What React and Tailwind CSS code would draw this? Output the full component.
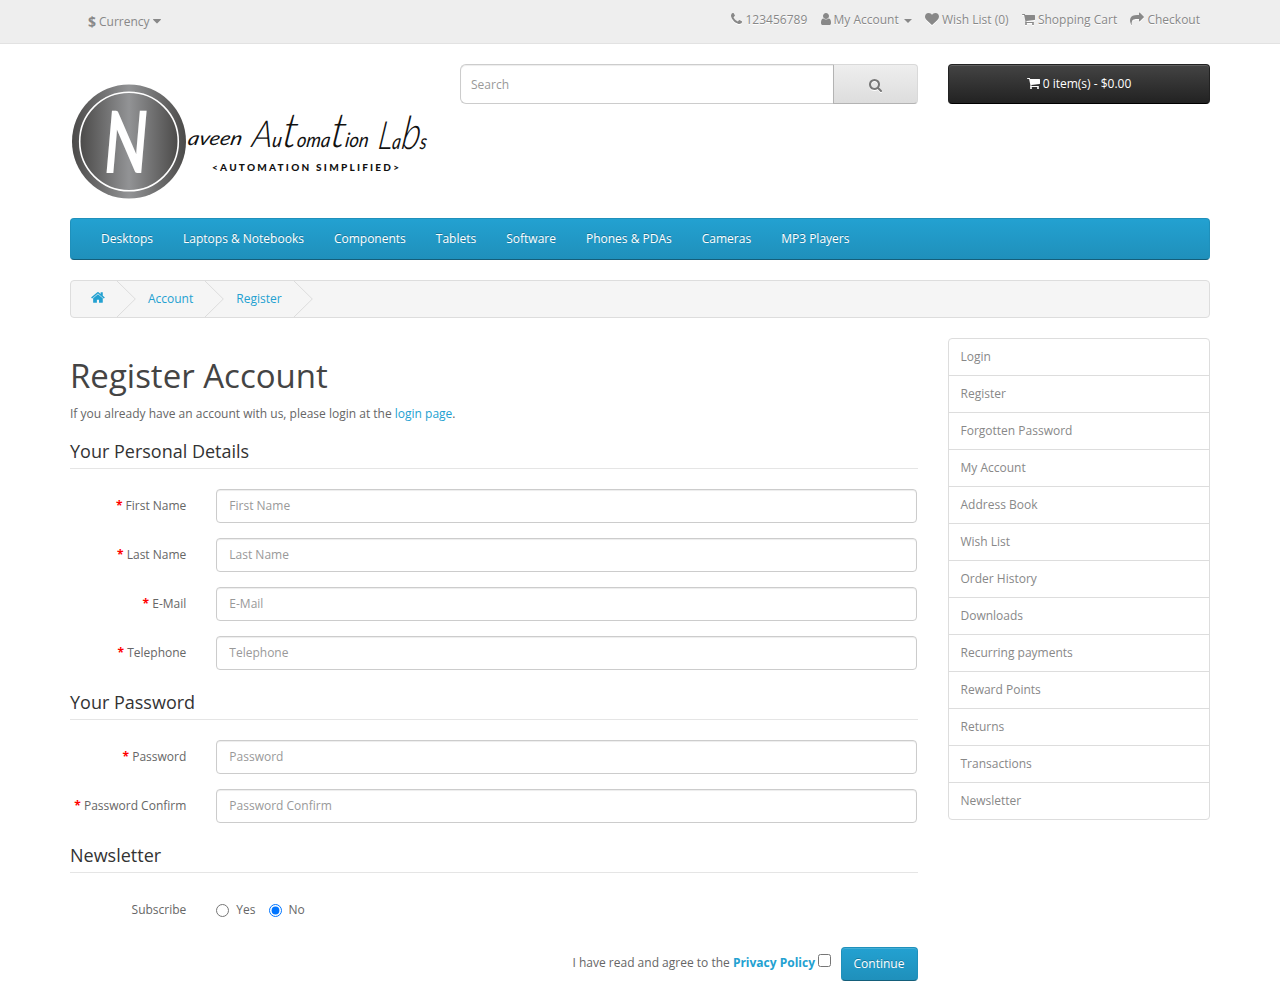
import React from "react";

const ICONS = {
  phone: [192, 1408, "M1600 1240q0 27-10 70.5t-21 68.5q-21 50-122 106-94 51-186 51-27 0-53-3.5t-57.5-12.5-47-14.5-55.5-20.5-49-18q-98-35-175-83-127-79-264-216t-216-264q-48-77-83-175-3-9-18-49t-20.5-55.5-14.5-47-12.5-57.5-3.5-53q0-92 51-186 56-101 106-122 25-11 68.5-21t70.5-10q14 0 21 3 18 6 53 76 11 19 30 54t35 63.5 31 53.5q3 4 17.5 25t21.5 35.5 7 28.5q0 20-28.5 50t-62 55-62 53-28.5 46q0 9 5 22.5t8.5 20.5 14 24 11.5 19q76 137 174 235t235 174q2 1 19 11.5t24 14 20.5 8.5 22.5 5q18 0 46-28.5t53-62 55-62 50-28.5q14 0 28.5 7t35.5 21.5 25 17.5q25 15 53.5 31t63.5 35 54 30q70 35 76 53 3 7 3 21z"],
  user: [256, 1280, "M1536 1399q0 109-62.5 187t-150.5 78h-854q-88 0-150.5-78t-62.5-187q0-85 8.5-160.5t31.5-152 58.5-131 94-89 134.5-34.5q131 128 313 128t313-128q76 0 134.5 34.5t94 89 58.5 131 31.5 152 8.5 160.5zm-256-887q0 159-112.5 271.5t-271.5 112.5-271.5-112.5-112.5-271.5 112.5-271.5 271.5-112.5 271.5 112.5 112.5 271.5z"],
  heart: [0, 1792, "M896 1664q-26 0-44-18l-624-602q-10-8-27.5-26t-55.5-65.5-68-97.5-53.5-121-23.5-138q0-220 127-344t351-124q62 0 126.5 21.5t120 58 95.5 68.5 76 68q36-36 76-68t95.5-68.5 120-58 126.5-21.5q224 0 351 124t127 344q0 221-229 450l-623 600q-18 18-44 18z"],
  cart: [64, 1664, "M704 1536q0 52-38 90t-90 38-90-38-38-90 38-90 90-38 90 38 38 90zm896 0q0 52-38 90t-90 38-90-38-38-90 38-90 90-38 90 38 38 90zm128-1088v512q0 24-16.5 42.5t-40.5 21.5l-1044 122q13 60 13 70 0 16-24 64h920q26 0 45 19t19 45-19 45-45 19h-1024q-26 0-45-19t-19-45q0-11 8-31.5t16-36 21.5-40 15.5-29.5l-177-823h-204q-26 0-45-19t-19-45 19-45 45-19h256q16 0 28.5 6.5t19.5 15.5 13 24.5 8 26 5.5 29.5 4.5 26h1201q26 0 45 19t19 45z"],
  share: [0, 1792, "M1792 640q0 26-19 45l-512 512q-19 19-45 19t-45-19-19-45v-256h-224q-98 0-175.5 6t-154 21.5-133 42.5-105.5 69.5-80 101-48.5 138.5-17.5 181q0 55 5 123 0 6 2.5 23.5t2.5 26.5q0 15-8.5 25t-23.5 10q-16 0-28-17-7-9-13-22t-13.5-30-10.5-24q-127-285-127-451 0-199 53-333 162-403 875-403h224v-256q0-26 19-45t45-19 45 19l512 512q19 19 19 45z"],
  search: [64, 1664, "M1216 832q0-185-131.5-316.5t-316.5-131.5-316.5 131.5-131.5 316.5 131.5 316.5 316.5 131.5 316.5-131.5 131.5-316.5zm512 832q0 52-38 90t-90 38q-54 0-90-38l-343-342q-179 124-399 124-143 0-273.5-55.5t-225-150-150-225-55.5-273.5 55.5-273.5 150-225 225-150 273.5-55.5 273.5 55.5 225 150 150 225 55.5 273.5q0 220-124 399l343 343q37 37 37 90z"],
  home: [64, 1664, "M1472 992v480q0 26-19 45t-45 19h-384v-384h-256v384h-384q-26 0-45-19t-19-45v-480q0-1 .5-3t.5-3l575-474 575 474q1 2 1 6zm223-69l-62 74q-8 9-21 11h-3q-13 0-21-7l-692-577-692 577q-12 8-24 7-13-2-21-11l-62-74q-8-10-7-23.5t11-21.5l719-599q32-26 76-26t76 26l244 204v-195q0-14 9-23t23-9h192q14 0 23 9t9 23v408l219 182q10 8 11 21.5t-7 23.5z"],
  caret: [384, 1024, "M1408 704q0 26-19 45l-448 448q-19 19-45 19t-45-19l-448-448q-19-19-19-45t19-45 45-19h896q26 0 45 19t19 45z"],
};

function Icon({ name, className = "h-[14px]" }) {
  const [x, w, d] = ICONS[name];
  return (
    <svg viewBox={`${x} 0 ${w} 1792`} className={`shrink-0 fill-current ${className}`}>
      <path d={d} />
    </svg>
  );
}

function TopLink({ icon, children }) {
  return (
    <a className="flex h-5 items-center gap-[3px]">
      <Icon name={icon} className="mb-[2px] h-[14px] drop-shadow-[0_1px_0_#fff]" />
      <span>{children}</span>
    </a>
  );
}

function Logo() {
  return (
    <svg viewBox="70 64 360 134.5" className="block h-[134.5px] w-[360px] overflow-visible">
      <defs>
        <linearGradient id="disc" x1="0" x2="1">
          <stop offset="0" stopColor="#4b4a49" />
          <stop offset=".5" stopColor="#929395" />
          <stop offset="1" stopColor="#4b4a49" />
        </linearGradient>
      </defs>
      <circle cx="129" cy="141.5" r="57" fill="url(#disc)" />
      <circle cx="129" cy="141.5" r="49.3" fill="url(#disc)" stroke="#fff" strokeWidth="1.6" />
      <text transform="translate(102 173) skewX(-5) scale(.66 1)" fontFamily="Lato" fontWeight="700" fontSize="86" fill="#fff">N</text>
      <g fontFamily="Lato" fontStyle="italic" fontWeight="400" fill="#111">
        <text transform="translate(187 145) skewX(-12)" fontSize="19" textLength="54" lengthAdjust="spacingAndGlyphs">aveen</text>
        <text transform="translate(251 147) skewX(-8)" fontSize="20" textLength="117" lengthAdjust="spacingAndGlyphs"><tspan fontSize="37" fontWeight="300">A</tspan>u<tspan fontSize="48" fontWeight="300">t</tspan>oma<tspan fontSize="48" fontWeight="300">t</tspan>ion</text>
        <text transform="translate(377 149) skewX(-8)" fontSize="21" textLength="49" lengthAdjust="spacingAndGlyphs"><tspan fontSize="39" fontWeight="300">L</tspan>a<tspan fontSize="46" fontWeight="300">b</tspan>s</text>
      </g>
      <text x="212" y="170.5" fontFamily="Lato" fontWeight="900" fontSize="10" fill="#111" textLength="187">&lt;AUTOMATION SIMPLIFIED&gt;</text>
    </svg>
  );
}

function Crumb({ children }) {
  return (
    <li className="flex h-9 items-center">
      {children}
      <svg viewBox="0 0 19 36" className="ml-[11px] mr-[13px] h-9 w-[19px] overflow-visible" fill="none" stroke="#ddd">
        <path d="M1 0l18.3 18L1 36" />
      </svg>
    </li>
  );
}

function Legend({ children }) {
  return <h2 className="mb-5 h-[35px] border-b border-[#e5e5e5] py-[7px] text-[18px] leading-5 text-[#333]">{children}</h2>;
}

function Field({ label, type = "text" }) {
  return (
    <div className="mb-[15px] flex h-[34px] items-center pr-px">
      <label className="w-[116.33px] shrink-0 whitespace-nowrap text-right">
        <span className="font-bold text-[#f00]">* </span>
        {label}
      </label>
      <input
        type={type}
        placeholder={label}
        className="ml-[30px] h-[34px] min-w-0 flex-1 rounded-[4px] border border-[#ccc] bg-white px-3 pb-[2px] text-[12px] text-[#555] shadow-[inset_0_1px_1px_rgba(0,0,0,0.075)] placeholder:text-[#999]"
      />
    </div>
  );
}

const MENU = ["Desktops", "Laptops & Notebooks", "Components", "Tablets", "Software", "Phones & PDAs", "Cameras", "MP3 Players"];
const SIDE = ["Login", "Register", "Forgotten Password", "My Account", "Address Book", "Wish List", "Order History", "Downloads", "Recurring payments", "Reward Points", "Returns", "Transactions", "Newsletter"];

export default function App() {
  return (
    <div className="h-[981px] w-[1280px] overflow-hidden bg-white font-['Open_Sans',sans-serif] text-[12px] leading-5 text-[#666]">
      <nav className="h-11 border-b border-[#e2e2e2] bg-[#eee] text-[#888] [text-shadow:0_1px_0_#fff]">
        <div className="mx-auto flex w-[1140px] justify-between pl-[18px] pr-[10px]">
          <button className="mt-3 flex h-5 items-center">
            <strong className="mr-[3px] text-[14px]">$</strong>
            <span>Currency</span>
            <Icon name="caret" className="mb-[2px] ml-[3px] h-[14px]" />
          </button>
          <div className="mt-[10px] flex gap-[13.25px]">
            <TopLink icon="phone">123456789</TopLink>
            <a className="flex h-5 items-center">
              <Icon name="user" className="mb-[2px] mr-[3px] h-[14px]" />
              <span>My Account</span>
              <svg viewBox="0 0 8 4" className="ml-[5px] mt-[2px] h-1 w-2 fill-current"><path d="M0 0h8L4 4z" /></svg>
            </a>
            <TopLink icon="heart">Wish List (0)</TopLink>
            <TopLink icon="cart">Shopping Cart</TopLink>
            <TopLink icon="share">Checkout</TopLink>
          </div>
        </div>
      </nav>

      <div className="mx-auto w-[1140px]">
        <header className="mt-5 flex h-[154px] items-start">
          <Logo />
          <div className="ml-[30px] flex h-10 w-[458px]">
            <input
              placeholder="Search"
              className="h-10 w-[373px] rounded-l-[6px] border border-r-0 border-[#ccc] px-[10px] text-[12px] leading-5 shadow-[inset_0_1px_1px_rgba(0,0,0,0.075)] placeholder:text-[#999]"
            />
            <button className="flex h-10 flex-1 items-center justify-center rounded-r-[4px] border border-b-[#b3b3b3] border-l-[#b3b3b3] border-r-[#d9d9d9] border-t-[#d9d9d9] bg-linear-to-b from-[#eee] to-[#ddd] pr-px text-[#777]">
              <Icon name="search" className="mt-px h-[14px] drop-shadow-[0_1px_0_#fff]" />
            </button>
          </div>
          <button className="ml-[30px] flex h-10 w-[262px] items-center justify-center gap-[3px] rounded-[4px] border border-b-black border-l-[#222] border-r-[#222] border-t-[#222] bg-linear-to-b from-[#444] to-[#222] text-white shadow-[inset_0_1px_0_rgba(255,255,255,0.15)]">
            <Icon name="cart" className="mb-[2px] h-[14px]" />
            <span>0 item(s) - $0.00</span>
          </button>
        </header>

        <nav className="flex h-[42px] items-center gap-[30px] rounded-[4px] border border-b-[#145e7a] border-l-[#1f90bb] border-r-[#1f90bb] border-t-[#1f90bb] bg-linear-to-b from-[#23a1d1] to-[#1f90bb] pl-[30px] text-white [text-shadow:0_-1px_0_rgba(0,0,0,0.25)]">
          {MENU.map((m) => (
            <a key={m}>{m}</a>
          ))}
        </nav>

        <ul className="mt-5 flex h-[38px] rounded-[4px] border border-[#ddd] bg-[#f5f5f5] pl-5 text-[#23a1d1]">
          <Crumb><Icon name="home" className="mb-[3px] h-[15px]" /></Crumb>
          <Crumb>Account</Crumb>
          <Crumb>Register</Crumb>
        </ul>

        <div className="mt-5 flex gap-[30px]">
          <main className="w-[848px]">
            <h1 className="mb-[10px] mt-5 h-9 text-[33px] leading-9 text-[#444]">Register Account</h1>
            <p className="mb-[10px]">
              If you already have an account with us, please login at the <a className="text-[#23a1d1]">login page</a>.
            </p>
            <Legend>Your Personal Details</Legend>
            <Field label="First Name" />
            <Field label="Last Name" />
            <Field label="E-Mail" />
            <Field label="Telephone" />
            <Legend>Your Password</Legend>
            <Field label="Password" type="password" />
            <Field label="Password Confirm" type="password" />
            <Legend>Newsletter</Legend>
            <div className="mb-5 flex h-[34px] items-center">
              <span className="w-[116.33px] text-right">Subscribe</span>
              <label className="ml-[30px] flex items-center gap-[7px]">
                <input type="radio" name="newsletter" className="h-[13px] w-[13px]" />
                Yes
              </label>
              <label className="ml-[13px] flex items-center gap-[7px]">
                <input type="radio" name="newsletter" defaultChecked className="h-[13px] w-[13px]" />
                No
              </label>
            </div>
            <div className="flex h-[34px] justify-end">
              <span className="mt-[6px]">
                I have read and agree to the <b className="text-[#23a1d1]">Privacy Policy</b>
              </span>
              <input type="checkbox" className="ml-[3px] mt-[7px] h-[13px] w-[13px]" />
              <button className="ml-[10px] h-[34px] w-[77px] rounded-[4px] border border-b-[#145e7a] border-l-[#1f90bb] border-r-[#1f90bb] border-t-[#1f90bb] bg-linear-to-b from-[#23a1d1] to-[#1f90bb] pr-px text-white shadow-[inset_0_1px_0_rgba(255,255,255,0.15)] [text-shadow:0_-1px_0_rgba(0,0,0,0.25)]">
                Continue
              </button>
            </div>
          </main>
          <aside className="h-[482px] w-[262px] divide-y divide-[#ddd] rounded-[4px] border border-[#ddd] text-[#888]">
            {SIDE.map((s) => (
              <a key={s} className="block px-[11.5px] py-2">{s}</a>
            ))}
          </aside>
        </div>
      </div>
    </div>
  );
}
